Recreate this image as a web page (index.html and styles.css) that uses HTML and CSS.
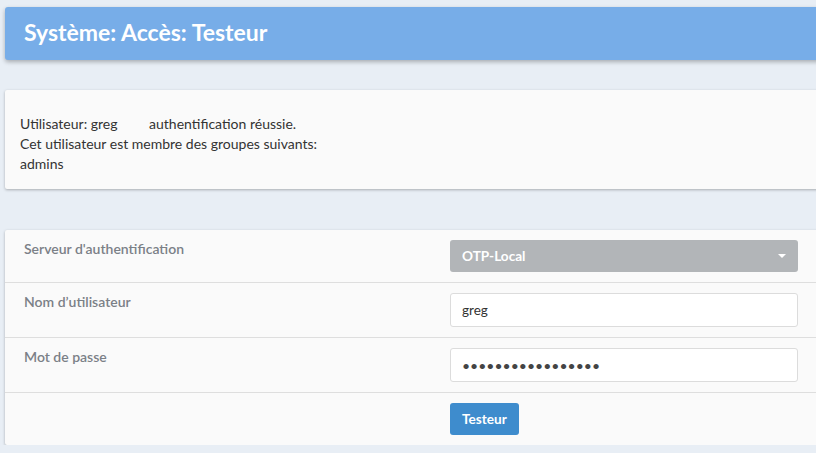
FILE: index.html
```html
<!DOCTYPE html>
<html lang="fr">
<head>
<meta charset="utf-8">
<title>Système: Accès: Testeur</title>
<link rel="stylesheet" href="styles.css">
</head>
<body>
<div class="page">
  <header class="page-header">
    <h1 class="page-title">Système: Accès: Testeur</h1>
  </header>

  <section class="card result-card">
    <div class="result-line">Utilisateur: greg <span class="result-status">authentification réussie.</span></div>
    <div class="result-line">Cet utilisateur est membre des groupes suivants:</div>
    <div class="result-line">admins</div>
  </section>

  <section class="card form-card">
    <div class="form-row">
      <div class="form-label">Serveur d'authentification</div>
      <div class="form-field">
        <div class="select-wrap">
          <select class="select-control">
            <option>OTP-Local</option>
          </select>
        </div>
      </div>
    </div>
    <div class="form-row">
      <div class="form-label">Nom d’utilisateur</div>
      <div class="form-field">
        <input class="text-control" type="text" value="greg">
      </div>
    </div>
    <div class="form-row">
      <div class="form-label">Mot de passe</div>
      <div class="form-field">
        <input class="text-control password-control" type="password" value="aaaaaaaaaaaaaaaaa">
      </div>
    </div>
    <div class="form-row">
      <div class="form-label"></div>
      <div class="form-field">
        <button class="btn-primary" type="button">Testeur</button>
      </div>
    </div>
  </section>
</div>
</body>
</html>
```

FILE: styles.css
```css
html, body {
  margin: 0;
  padding: 0;
}

body {
  background: #e8eef5;
  font-family: Lato, "Open Sans", "Liberation Sans", sans-serif;
  font-size: 14px;
  color: #333;
  overflow: hidden;
}

.page {
  padding: 7px 0 0 5px;
  margin-right: -12px;
}

.page-header {
  background: #77ade8;
  height: 53px;
  border-radius: 3px;
  box-shadow: 0 2px 4px rgba(0, 0, 0, 0.28);
  display: flex;
  align-items: center;
  padding: 0 19px 3px;
  box-sizing: border-box;
}

.page-title {
  margin: 0;
  color: #fff;
  font-size: 23px;
  font-weight: 700;
  line-height: 26px;
}

.card {
  background: #fafafa;
  box-shadow: 0 1px 3px rgba(0, 0, 0, 0.28);
  border-radius: 2px;
}

.result-card {
  margin-top: 30px;
  padding: 24px 15px 15px;
  height: 99px;
  box-sizing: border-box;
}

.result-line {
  line-height: 20px;
  color: #333;
}

.result-status {
  margin-left: 28px;
}

.form-card {
  margin-top: 41px;
}

.form-row {
  display: flex;
  border-bottom: 1px solid #dedede;
}

.form-row:last-child {
  border-bottom: none;
}

.form-label {
  width: 445px;
  box-sizing: border-box;
  padding: 9px 19px 0;
  line-height: 20px;
  color: #7b8087;
  font-weight: 600;
}

.form-field {
  padding: 10px 0;
  width: 348px;
}

.select-wrap {
  position: relative;
}

.select-wrap::after {
  content: "";
  position: absolute;
  right: 12px;
  top: 14px;
  border-left: 4px solid transparent;
  border-right: 4px solid transparent;
  border-top: 4px solid #fff;
  pointer-events: none;
}

.select-control {
  appearance: none;
  -webkit-appearance: none;
  display: block;
  width: 100%;
  height: 32px;
  border: none;
  border-radius: 3px;
  background: #b2b5b8;
  color: #fff;
  font-family: inherit;
  font-size: 13.6px;
  font-weight: 700;
  padding: 0 12px;
  margin: 0;
}

.text-control {
  display: block;
  width: 100%;
  height: 34px;
  box-sizing: border-box;
  border: 1px solid #dcdcdc;
  border-radius: 3px;
  background: #fff;
  font-family: inherit;
  font-size: 13.5px;
  color: #333;
  padding: 0 11px;
  margin: 0;
}

.password-control {
  font-size: 14px;
  letter-spacing: 0;
  color: #444;
}

.btn-primary {
  display: block;
  height: 32px;
  padding: 0 12px;
  border: none;
  border-radius: 3px;
  background: #3e8ccd;
  color: #fff;
  font-family: inherit;
  font-size: 13.6px;
  font-weight: 700;
  margin: 0;
}
```
